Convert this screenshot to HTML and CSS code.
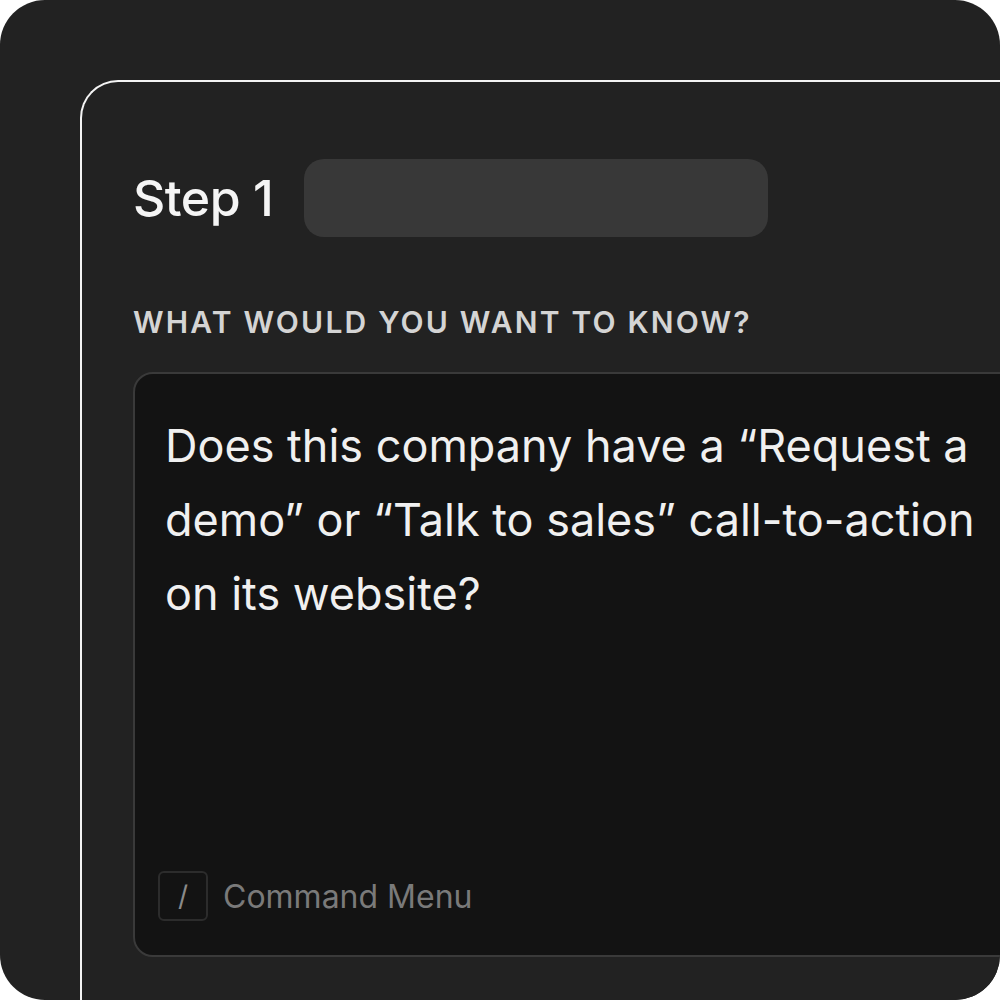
FILE: index.html
```html
<!DOCTYPE html>
<html>
<head>
<meta charset="utf-8">
<link rel="stylesheet" href="styles.css">
</head>
<body>
<div class="frame">
  <div class="card">
    <div class="step-row">
      <h1 class="step-title">Step 1</h1>
      <div class="step-pill"></div>
    </div>
    <div class="label">What would you want to know?</div>
    <div class="prompt">
      <p class="prompt-text">Does this company have a “Request a demo” or “Talk to sales” call-to-action on its website?</p>
      <div class="command">
        <span class="kbd">/</span>
        <span class="command-text">Command Menu</span>
      </div>
    </div>
  </div>
</div>
</body>
</html>
```

FILE: styles.css
```css
* { box-sizing: border-box; }
html, body { margin: 0; padding: 0; background: #ffffff; }
body { font-family: Inter, "Noto Sans", sans-serif; }
.frame {
  width: 1000px;
  height: 1000px;
  background: #222222;
  border-radius: 45px;
  overflow: hidden;
  padding: 80px 0 0 80px;
}
.card {
  width: 1000px;
  height: 1000px;
  border-top: 2px solid #f4f4f4;
  border-left: 2px solid #f4f4f4;
  border-top-left-radius: 38px;
  background: #222222;
  padding: 77px 0 0 51px;
}
.step-row {
  display: flex;
  align-items: center;
  gap: 31px;
  height: 78px;
}
.step-title {
  margin: 0;
  font-size: 50px;
  font-weight: 500;
  color: #f5f5f5;
  letter-spacing: -0.5px;
}
.step-pill {
  width: 464px;
  height: 78px;
  background: #383838;
  border-radius: 20px;
}
.label {
  margin-top: 67px;
  font-size: 30px;
  font-weight: 600;
  letter-spacing: 2.2px;
  text-transform: uppercase;
  color: #d4d4d4;
  line-height: 36px;
}
.prompt {
  margin-top: 32px;
  width: 900px;
  height: 585px;
  background: #131313;
  border: 2px solid #3a3a3a;
  border-radius: 20px;
  padding: 35px 30px 34px 30px;
  display: flex;
  flex-direction: column;
  justify-content: space-between;
}
.prompt-text {
  margin: 0;
  font-size: 45px;
  line-height: 74px;
  color: #f0f0f0;
  width: 820px;
}
.command {
  display: flex;
  align-items: center;
  gap: 15px;
  margin-left: -7px;
}
.kbd {
  width: 50px;
  height: 50px;
  border: 2px solid #2c2c2c;
  border-radius: 6px;
  display: flex;
  align-items: center;
  justify-content: center;
  color: #8a8a8a;
  font-size: 28px;
}
.command-text {
  font-size: 32px;
  color: #7a7a7a;
}
```
